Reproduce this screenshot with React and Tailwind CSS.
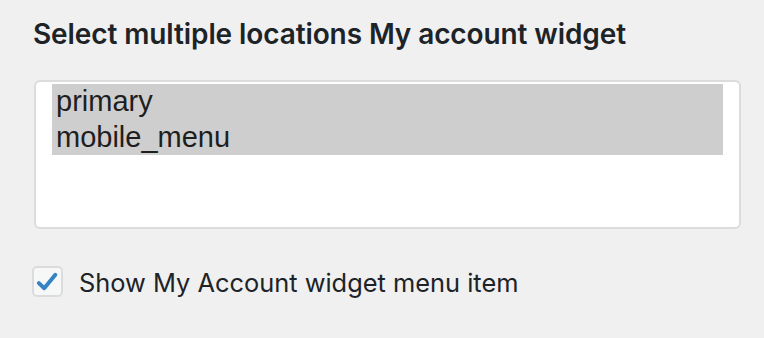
import React from "react";

function App() {
  const options = ["primary", "mobile_menu"];
  return (
    <div
      className="w-[764px] h-[338px] bg-[#f0f0f1] text-[#1d2327] pl-[33px] pr-[23px] pt-[18px]"
      style={{ fontFamily: "Inter, 'Noto Sans', sans-serif" }}
    >
      <h3 className="text-[28px] leading-[32px] font-semibold tracking-[-0.1px]">
        Select multiple locations My account widget
      </h3>

      {/* locations list */}
      <div className="mt-[30px] ml-px h-[149px] w-[707px] rounded-[6px] border-2 border-[#dcdcde] bg-white pt-[2px] px-[16px]">
        {options.map((o) => (
          <div
            key={o}
            className="h-[35.5px] bg-[#cecece] pl-[4px] text-[29px] leading-[34px] text-[#1e1e1e]"
            style={{ fontFamily: "'Liberation Sans', Arial, sans-serif" }}
          >
            {o}
          </div>
        ))}
      </div>

      <label className="mt-[36px] flex items-center gap-[16px]">
        <span className="flex h-[31px] w-[31px] items-center justify-center rounded-[5px] border-2 border-[#dcdcde] bg-[#f6f7f7] -ml-px">
          <svg width="30" height="30" viewBox="0 0 20 20">
            <path d="M3.6 10.8 L7.6 14.6 L15.8 4.6" fill="none" stroke="#3582c4" strokeWidth="2.9" strokeLinecap="round" strokeLinejoin="round" />
          </svg>
        </span>
        <span className="text-[25.4px] leading-[30px] mt-[3px]">Show My Account widget menu item</span>
      </label>
    </div>
  );
}

export default App;
